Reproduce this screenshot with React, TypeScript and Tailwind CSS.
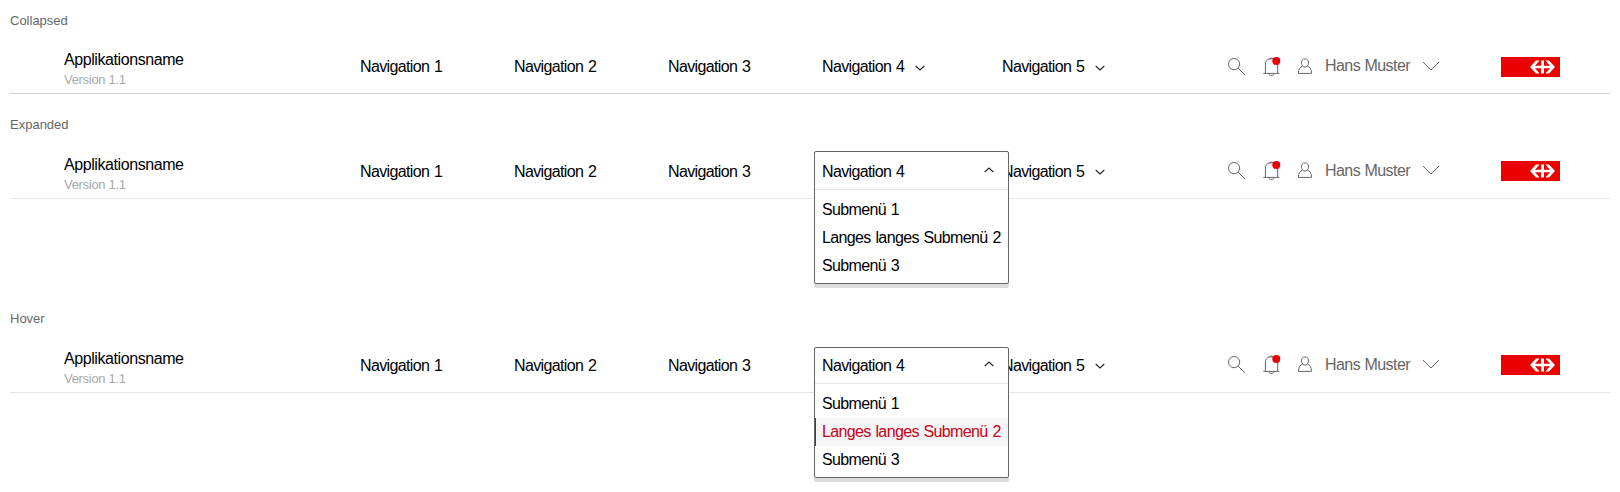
import React from "react";
import clsx from "clsx";

type MenuState = "collapsed" | "expanded" | "hover";

const submenu = ["Submenü 1", "Langes langes Submenü 2", "Submenü 3"];

function Chevron({ up = false }: { up?: boolean }) {
  return (
    <svg width="10" height="6" viewBox="0 0 10 6" fill="none" stroke="#222" strokeWidth="1.1" className="block">
      <path d={up ? "M0.7 5 L5 1 L9.3 5" : "M0.7 1 L5 5 L9.3 1"} />
    </svg>
  );
}

function SearchIcon() {
  return (
    <svg width="18" height="18" viewBox="0 0 18 18" fill="none" stroke="#666" strokeWidth="1" className="block">
      <circle cx="6.1" cy="6.1" r="5.6" />
      <path d="M10.2 10.2 L17.2 17.2" />
    </svg>
  );
}

function BellIcon() {
  return (
    <svg width="18" height="22" viewBox="0 0 18 22" fill="none" stroke="#666" strokeWidth="1" className="block">
      <path d="M0.3 17.4 H16.3 M2.4 17.4 V8.4 C2.4 5.4 4 3.4 6.4 2.9 H10.4 C12.9 3.4 14.7 5.4 14.7 8.4 V17.4" />
      <path d="M6.4 2.9 C6.8 1.9 10 1.9 10.4 2.9" />
      <path d="M5.7 17.6 C6.2 20.1 10.8 20.1 11.3 17.6" />
      <circle cx="13.3" cy="5" r="4" fill="#eb0000" stroke="none" />
    </svg>
  );
}

function UserIcon() {
  return (
    <svg width="15" height="17" viewBox="0 0 15 17" fill="none" stroke="#666" strokeWidth="1" className="block">
      <path d="M5 8.4 C2.8 6.6 2.6 0.9 7 0.9 C11.4 0.9 11.2 6.6 9 8.4 C8 9.3 6 9.3 5 8.4 Z" />
      <path d="M4.7 8 C2 9 0.5 11.2 0.5 15.4 H13.5 C13.5 11.2 12 9 9.3 8" />
    </svg>
  );
}

function Logo() {
  return (
    <svg width="59" height="20" viewBox="0 0 59 20" className="block">
      <rect width="59" height="20" fill="#eb0000" />
      <path
        fill="#fff"
        d="M29 10 L35 3.4 H38.6 L34 8.8 H40 V3.4 H43 V8.8 H49 L44.4 3.4 H48 L54 10 L48 16.6 H44.4 L49 11.2 H43 V16.6 H40 V11.2 H34 L38.6 16.6 H35 Z"
      />
    </svg>
  );
}

function NavMenu({ state }: { state: MenuState }) {
  const hover = state === "hover";
  return (
    <div
      className={clsx(
        "absolute left-[-8px] z-10 w-[195px] rounded-[2px] border border-[#666] bg-white shadow-[0_4px_0_#dcdcdc]",
        hover ? "-top-[9px]" : "-top-[11px]",
      )}
    >
      <div
        className={clsx(
          "flex justify-between border-b border-[#e5e5e5] pr-[14px] pl-[7px]",
          hover ? "h-[36px] pt-[8px]" : "h-[38px] pt-[10px]",
        )}
      >
        <span>Navigation 4</span>
        <span className="pt-[5px]">
          <Chevron up />
        </span>
      </div>
      <ul className="pt-[6px] pb-[3px]">
        {submenu.map((item, i) => (
          <li
            key={item}
            className={clsx(
              "h-7 pt-1 whitespace-nowrap",
              hover && i === 1 ? "border-l border-[#c60018] bg-[#f6f6f6] pl-[6px] text-[#c60018]" : "pl-[7px]",
            )}
          >
            {item}
          </li>
        ))}
      </ul>
    </div>
  );
}

function Header({ state }: { state: MenuState }) {
  const open = state !== "collapsed";
  return (
    <header
      className={clsx(
        "flex h-[45px] border-b pl-[54px]",
        open ? "border-[#e5e5e5]" : "border-[#d2d2d2]",
      )}
    >
      <div className="w-[296px]">
        <div className="pt-[1px] text-[16px] leading-5 tracking-[-0.42px]">Applikationsname</div>
        <div className="text-[13px] leading-[19px] tracking-[-0.3px] text-[#a8a8a8]">Version 1.1</div>
      </div>
      <nav className="flex w-[868px] pt-2 text-[16px] leading-5 tracking-[-0.64px] [word-spacing:1px]">
        <div className="w-[154px]">Navigation 1</div>
        <div className="w-[154px]">Navigation 2</div>
        <div className="w-[154px]">Navigation 3</div>
        <div className="relative w-[180px]">
          {open ? (
            <NavMenu state={state} />
          ) : (
            <div className="flex gap-[11px]">
              Navigation 4
              <span className="pt-2">
                <Chevron />
              </span>
            </div>
          )}
        </div>
        <div className="flex gap-[11px]">
          Navigation 5
          <span className={open ? "pt-[7px]" : "pt-2"}>
            <Chevron />
          </span>
        </div>
      </nav>
      <div
        className={clsx(
          "flex w-[273px] items-start text-[16px] leading-5 tracking-[-0.56px] text-[#666] [word-spacing:0.5px]",
          open ? "pt-[6px]" : "pt-[7px]",
        )}
      >
        <span className="w-[35px] pt-[2px]">
          <SearchIcon />
        </span>
        <span className="w-[35px]">
          <BellIcon />
        </span>
        <span className="w-[27px] pt-[2px]">
          <UserIcon />
        </span>
        <span className={clsx("w-[97px]", open && "pt-px")}>Hans Muster</span>
        <svg width="18" height="10" viewBox="0 0 18 10" fill="none" stroke="#666" className="mt-[5px]">
          <path d="M1 1 L9 9 L17 1" />
        </svg>
      </div>
      <div className={open ? "pt-[7px]" : "pt-2"}>
        <Logo />
      </div>
    </header>
  );
}

const examples: { label: string; state: MenuState; className: string; labelClass: string }[] = [
  { label: "Collapsed", state: "collapsed", className: "h-[94px]", labelClass: "mb-5" },
  { label: "Expanded", state: "expanded", className: "h-[105px]", labelClass: "mb-[21px]" },
  { label: "Hover", state: "hover", className: "h-[194px]", labelClass: "mb-[21px]" },
];

export default function App() {
  return (
    <main className="h-[492px] w-[1620px] overflow-hidden bg-white px-[10px] font-['Liberation_Sans',Arial,sans-serif] text-black">
      {examples.map(({ label, state, className, labelClass }) => (
        <section key={label} className={clsx("flex flex-col justify-end", className)}>
          <h2 className={clsx("text-[13px] leading-4 text-[#666]", labelClass)}>{label}</h2>
          <Header state={state} />
        </section>
      ))}
    </main>
  );
}
